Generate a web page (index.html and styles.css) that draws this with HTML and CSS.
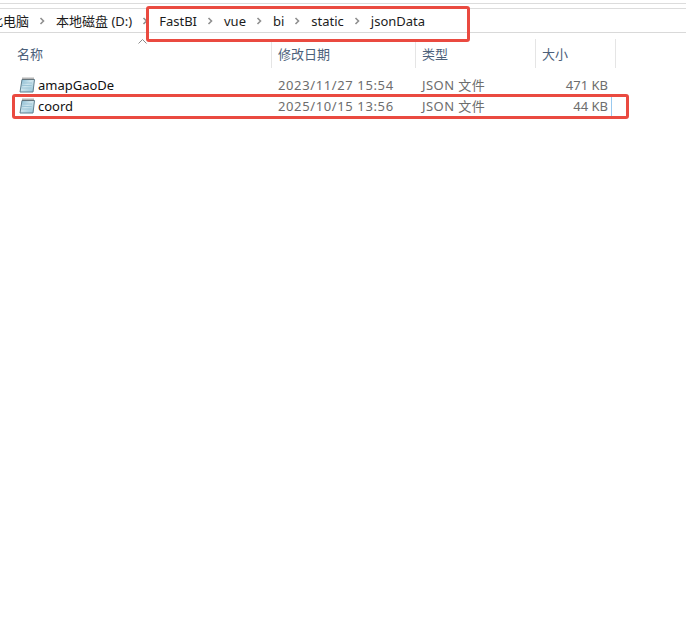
FILE: index.html
```html
<!DOCTYPE html>
<html lang="zh">
<head>
<meta charset="utf-8">
<title>jsonData</title>
<link rel="stylesheet" href="styles.css">
</head>
<body>
<svg class="defs" aria-hidden="true">
  <defs>
    <linearGradient id="paper" x1="0" y1="0" x2="1" y2="1">
      <stop offset="0" stop-color="#7fb6cf"/>
      <stop offset="0.45" stop-color="#cfe6ee"/>
      <stop offset="1" stop-color="#8fc0d4"/>
    </linearGradient>
    <symbol id="notepad" viewBox="0 0 16 16">
      <path class="page" d="M3 2.5 H15.5 L14 15 H1 Z"/>
      <path class="wire" d="M4 0.5 V3 M6 0.5 V3 M8 0.5 V3 M10 0.5 V3 M12 0.5 V3 M14 0.5 V3"/>
      <path class="ruled" d="M3.5 6 H13 M3 8.5 H12.7 M2.7 11 H12.4"/>
    </symbol>
    <symbol id="chevron" viewBox="0 0 6 8">
      <path class="chev-line" d="M1.5 1 L4.5 4 L1.5 7"/>
    </symbol>
  </defs>
</svg>
<div class="window">
  <div class="top-strip"></div>
  <nav class="address">
    <span class="crumb crumb-pc">此电脑</span>
    <svg class="chev"><use href="#chevron"/></svg>
    <span class="crumb">本地磁盘 (D:)</span>
    <svg class="chev"><use href="#chevron"/></svg>
    <span class="crumb">FastBI</span>
    <svg class="chev"><use href="#chevron"/></svg>
    <span class="crumb">vue</span>
    <svg class="chev"><use href="#chevron"/></svg>
    <span class="crumb">bi</span>
    <svg class="chev"><use href="#chevron"/></svg>
    <span class="crumb">static</span>
    <svg class="chev"><use href="#chevron"/></svg>
    <span class="crumb">jsonData</span>
  </nav>
  <div class="sort-row"><svg class="sort" viewBox="0 0 9 5"><path d="M0.5 4.5 L4.5 0.5 L8.5 4.5"/></svg></div>
  <div class="grid header">
    <span class="col col-name">名称</span>
    <span class="col">修改日期</span>
    <span class="col">类型</span>
    <span class="col">大小</span>
  </div>
  <div class="rows">
    <div class="grid row">
      <span class="name"><svg class="file"><use href="#notepad"/></svg>amapGaoDe</span>
      <span class="date">2023/11/27 15:54</span>
      <span class="type">JSON 文件</span>
      <span class="size">471 KB</span>
    </div>
    <div class="grid row">
      <span class="name"><svg class="file"><use href="#notepad"/></svg>coord</span>
      <span class="date">2025/10/15 13:56</span>
      <span class="type">JSON 文件</span>
      <span class="size size-caret">44 KB</span>
    </div>
  </div>
  <div class="mark mark-path"></div>
  <div class="mark mark-row"></div>
</div>
</body>
</html>
```
FILE: styles.css
```css
* { box-sizing: border-box; }
html, body { margin: 0; height: 100%; background: #fff; overflow: hidden; }
body {
  font-family: "Noto Sans", "Noto Sans CJK SC", sans-serif;
  font-size: 13px;
  color: #1c1c1c;
}
.defs { position: absolute; width: 0; height: 0; }
.window { position: relative; width: 686px; height: 623px; overflow: hidden; }
.top-strip {
  height: 6px;
  margin-top: 3px;
  border-top: 1px solid #dcdcdc;
  border-bottom: 1px solid #dcdcdc;
}
.address {
  display: flex;
  align-items: center;
  height: 24px;
  border-bottom: 1px solid #d9d9d9;
  white-space: nowrap;
}
.crumb { line-height: 18px; }
.crumb-pc { margin-left: -10px; }
.chev { width: 6px; height: 8px; margin: 0 11px 0 10px; flex: none; }
.chev-line { fill: none; stroke: #8f8f8f; stroke-width: 1.6; }
.sort-row { height: 6px; position: relative; }
.sort { position: absolute; left: 137.5px; top: 6px; width: 9px; height: 5px; }
.sort path { fill: none; stroke: #8c8c8c; stroke-width: 1; }
.grid { display: grid; grid-template-columns: 272px 144px 120px 80px; }
.header { height: 29px; }
.col {
  color: #4c607a;
  border-right: 1px solid #e5e5e5;
  padding: 2px 0 0 6px;
  line-height: 27px;
}
.col-name { padding-left: 17px; }
.rows { margin-top: 7px; }
.row { height: 21px; align-items: center; line-height: 21px; color: #6d6d6d; }
.name { display: flex; align-items: center; gap: 3px; padding-left: 19px; color: #111; }
.file { width: 16px; height: 16px; flex: none; margin-top: -2px; }
.page { fill: url(#paper); stroke: #5f7f8e; stroke-width: 1; }
.wire { stroke: #6a6a6a; stroke-width: 1; fill: none; }
.ruled { stroke: #9cc4d6; stroke-width: 1; fill: none; }
.date { padding-left: 6px; letter-spacing: 0.62px; }
.type { padding-left: 6px; letter-spacing: 0.45px; }
.size { text-align: right; padding-right: 8px; position: relative; }
.size-caret::after {
  content: "";
  position: absolute;
  right: 4px;
  top: 0;
  width: 1px;
  height: 21px;
  background: #99c9ef;
}
.mark { position: absolute; border: 3px solid #ea4a40; border-radius: 3px; }
.mark-path { left: 146px; top: 6px; width: 324px; height: 36px; }
.mark-row { left: 12px; top: 94px; width: 617px; height: 25px; }
```
